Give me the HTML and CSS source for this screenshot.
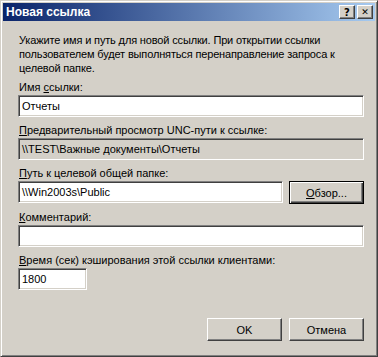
FILE: index.html
```html
<!DOCTYPE html>
<html lang="ru">

<head>
    <meta charset="UTF-8">
    <meta name="viewport" content="width=device-width, initial-scale=1.0">
    <title>Новая ссылка</title>
    <link rel="stylesheet" href="styles.css">
</head>

<body>
    <div class="window">
        <div class="titlebar">
            <div class="title">Новая ссылка</div>
            <div class="caption-buttons">
                <button class="caption-btn">?</button>
                <button class="caption-btn close">&#x2715;</button>
            </div>
        </div>

        <div class="content">
            <p class="intro">Укажите имя и путь для новой ссылки. При открытии ссылки<br>пользователем будет выполняться перенаправление запроса к<br>целевой папке.</p>

            <div class="form-group">
                <label>Имя <u>с</u>сылки:</label>
                <div class="edit">Отчеты</div>
            </div>

            <div class="form-group">
                <label><u>П</u>редварительный просмотр UNC-пути к ссылке:</label>
                <div class="edit readonly">\\TEST\Важные документы\Отчеты</div>
            </div>

            <div class="form-group">
                <label><u>П</u>уть к целевой общей папке:</label>
                <div class="row">
                    <div class="edit path">\\Win2003s\Public</div>
                    <button class="btn browse"><u>О</u>бзор...</button>
                </div>
            </div>

            <div class="form-group">
                <label><u>К</u>омментарий:</label>
                <div class="edit"></div>
            </div>

            <div class="form-group">
                <label><u>В</u>ремя (сек) кэширования этой ссылки клиентами:</label>
                <div class="edit short">1800</div>
            </div>

            <div class="actions">
                <button class="btn">OK</button>
                <button class="btn">Отмена</button>
            </div>
        </div>
    </div>
</body>

</html>
```

FILE: styles.css
```css
* {
    margin: 0;
    padding: 0;
    box-sizing: border-box;
}

body {
    font-family: "Liberation Sans", Arial, sans-serif;
    font-size: 11px;
    background-color: #d4d0c8;
    color: #000;
}

.window {
    width: 378px;
    height: 357px;
    background-color: #d4d0c8;
    border: 1px solid;
    border-color: #d4d0c8 #404040 #404040 #d4d0c8;
    box-shadow: inset 1px 1px #fff, inset -1px -1px #808080;
    padding: 2px;
    display: flex;
    flex-direction: column;
}

.titlebar {
    height: 18px;
    background: linear-gradient(to right, #0a246a, #a6caf0);
    display: flex;
    align-items: center;
    justify-content: space-between;
    padding: 0 2px 0 3px;
}

.title {
    color: #fff;
    font-weight: bold;
    font-size: 12px;
}

.caption-buttons {
    display: flex;
    gap: 2px;
}

.caption-btn {
    width: 16px;
    height: 14px;
    background-color: #d4d0c8;
    border: 1px solid;
    border-color: #fff #404040 #404040 #fff;
    box-shadow: inset -1px -1px #808080;
    font-family: "DejaVu Sans", sans-serif;
    font-weight: bold;
    font-size: 10px;
    line-height: 11px;
    color: #000;
    text-align: center;
}

.caption-btn.close {
    font-size: 9px;
}

.content {
    flex: 1;
    padding: 12px 11px 0 15px;
    display: flex;
    flex-direction: column;
}

.intro {
    line-height: 14px;
    padding-left: 1px;
    margin-bottom: 5px;
    white-space: nowrap;
    letter-spacing: -0.15px;
}

.form-group {
    margin-bottom: 6px;
}

label {
    display: block;
    line-height: 14px;
    padding-left: 1px;
    margin-bottom: 1px;
}

.edit {
    height: 22px;
    background-color: #fff;
    border: 1px solid;
    border-color: #808080 #fff #fff #808080;
    box-shadow: inset 1px 1px #404040, inset -1px -1px #d4d0c8;
    padding: 0 3px;
    line-height: 20px;
    white-space: nowrap;
}

.edit.readonly {
    background-color: #d4d0c8;
}

.edit.short {
    width: 69px;
}

.row {
    display: flex;
    gap: 6px;
}

.edit.path {
    flex: 1;
}

.btn {
    width: 75px;
    height: 23px;
    background-color: #d4d0c8;
    border: 1px solid;
    border-color: #fff #404040 #404040 #fff;
    box-shadow: inset -1px -1px #808080;
    font-family: inherit;
    font-size: 11px;
    color: #000;
}

.btn.browse {
    border-color: #000;
    box-shadow: inset 1px 1px #fff, inset -1px -1px #404040, inset -2px -2px #808080;
}

.actions {
    margin-top: auto;
    margin-bottom: 13px;
    display: flex;
    justify-content: flex-end;
    gap: 7px;
}
```
